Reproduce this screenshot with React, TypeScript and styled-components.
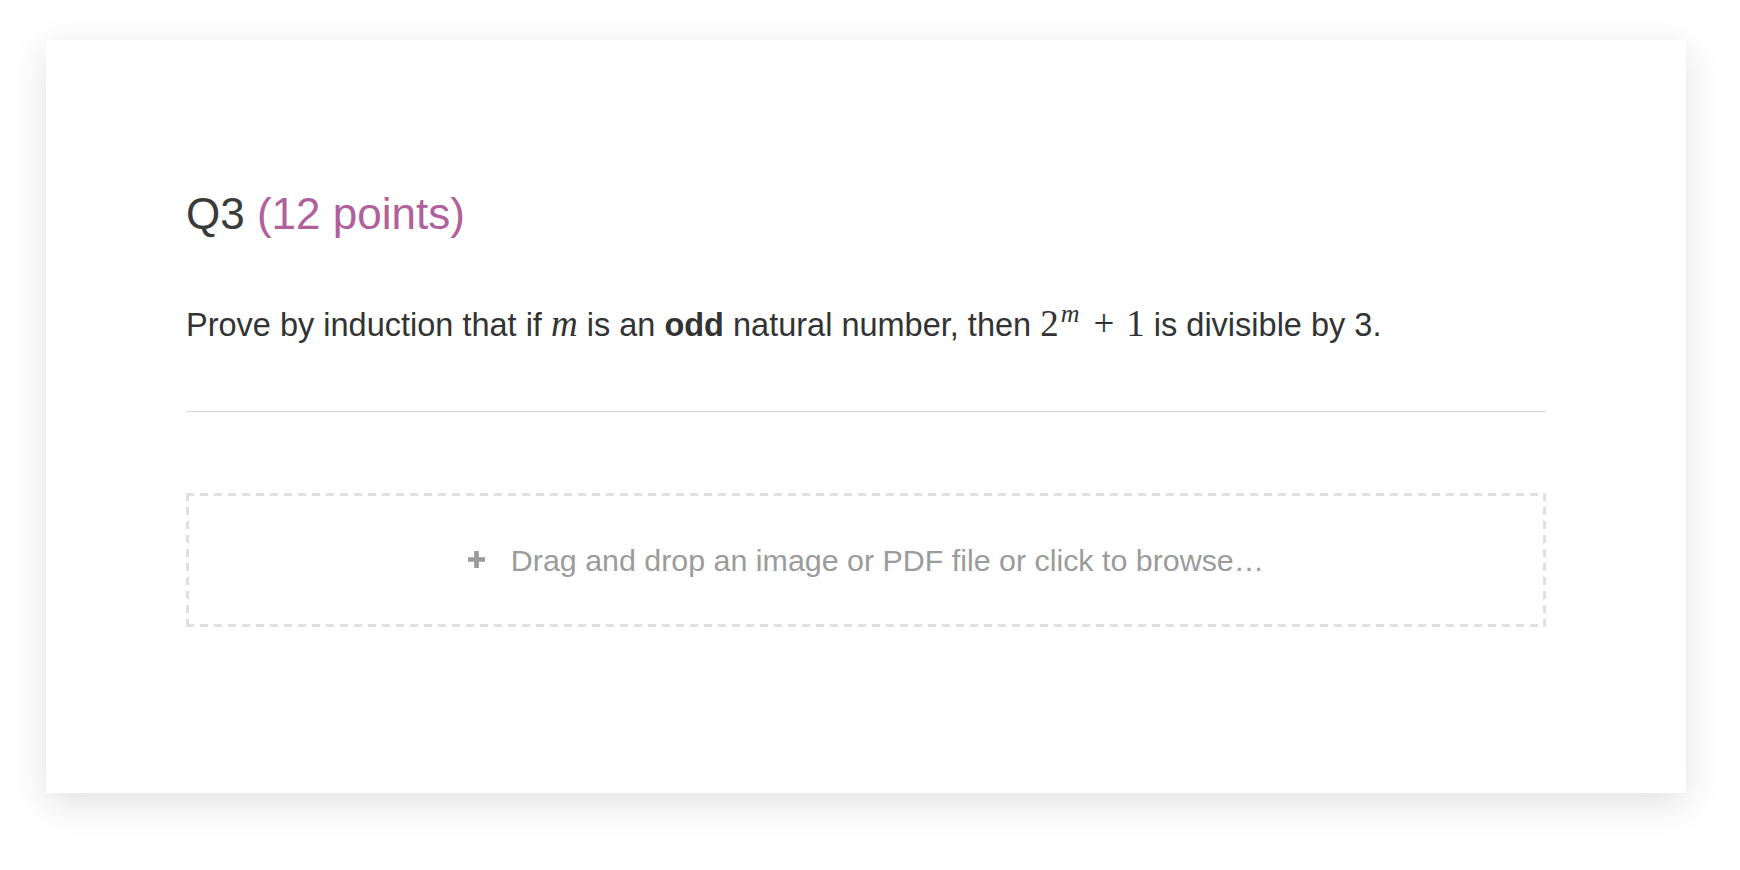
import styled, { createGlobalStyle } from "styled-components";

const GlobalStyle = createGlobalStyle`
	html, body {
		margin: 0;
		padding: 0;
		background: #ffffff;
	}
	body {
		font-family: "Liberation Sans", Arial, sans-serif;
		color: #333333;
	}
`;

const Page = () => {
	return (
		<>
			<GlobalStyle />
			<Wrapper>
				<Card>
					<Heading>
						Q3 <Points>(12 points)</Points>
					</Heading>
					<Prompt>
						Prove by induction that if <MathVar>m</MathVar> is an{" "}
						<strong>odd</strong> natural number, then{" "}
						<MathExpr>
							2<Sup>m</Sup>
							<Op>+</Op>1
						</MathExpr>{" "}
						is divisible by 3.
					</Prompt>
					<Divider />
					<DropZone>
						<PlusIcon viewBox="0 0 18 18">
							<path d="M6.5 0h5v6.5H18v5h-6.5V18h-5v-6.5H0v-5h6.5z" fill="currentColor" />
						</PlusIcon>
						<DropText>Drag and drop an image or PDF file or click to browse…</DropText>
					</DropZone>
				</Card>
			</Wrapper>
		</>
	);
};

const Wrapper = styled.div`
	padding: 40px 54px 78px 46px;
`;

const Card = styled.div`
	background: #ffffff;
	box-shadow: 0 10px 36px rgba(0, 0, 0, 0.12);
	padding: 148px 140px 166px;
	display: flex;
	flex-direction: column;
`;

const Heading = styled.h2`
	margin: 0;
	font-size: 44px;
	font-weight: 400;
	line-height: 1.2;
	color: #3b3b3b;
`;

const Points = styled.span`
	color: #b0609b;
`;

const Prompt = styled.p`
	margin: 60px 0 0;
	font-size: 32.5px;
	line-height: 48px;
	color: #333333;

	strong {
		font-weight: 700;
	}
`;

const MathVar = styled.i`
	font-family: "Liberation Serif", "Times New Roman", serif;
	font-size: 37px;
	line-height: 1;
	font-style: italic;
`;

const MathExpr = styled.span`
	font-family: "Liberation Serif", "Times New Roman", serif;
	font-size: 37px;
	line-height: 1;
`;

const Sup = styled.sup`
	font-style: italic;
	font-size: 26px;
	vertical-align: 14px;
	line-height: 0;
	margin-left: 2px;
`;

const Op = styled.span`
	margin: 0 12px 0 14px;
`;

const Divider = styled.hr`
	margin: 62px 0 0;
	border: none;
	height: 1px;
	background: #d6d6d6;
`;

const DropZone = styled.div`
	margin-top: 81px;
	height: 134px;
	box-sizing: border-box;
	background:
		linear-gradient(90deg, #dfdfdf 58%, transparent 0) top left / 14px 3px repeat-x,
		linear-gradient(90deg, #dfdfdf 58%, transparent 0) bottom left / 14px 3px repeat-x,
		linear-gradient(180deg, #dfdfdf 58%, transparent 0) top left / 3px 14px repeat-y,
		linear-gradient(180deg, #dfdfdf 58%, transparent 0) top right / 3px 14px repeat-y;
	display: flex;
	align-items: center;
	justify-content: center;
	color: #9b9b9b;
	cursor: pointer;
`;

const PlusIcon = styled.svg`
	width: 17px;
	height: 17px;
	margin-right: 26px;
	color: #9b9b9b;
`;

const DropText = styled.span`
	font-size: 30.4px;
	line-height: 1;
`;

export default Page;
